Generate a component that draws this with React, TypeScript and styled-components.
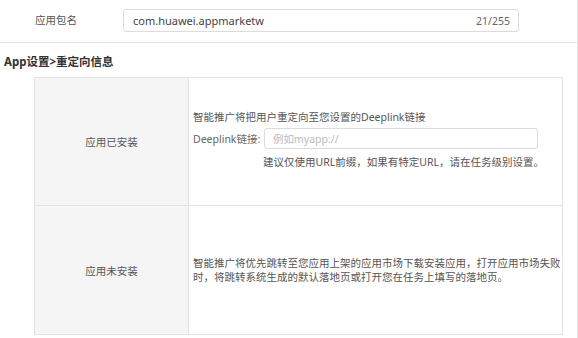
import styled, { createGlobalStyle } from 'styled-components';

const GlobalStyle = createGlobalStyle`
  html, body {
    margin: 0;
    padding: 0;
    background: #ffffff;
  }
  body {
    font-family: "Noto Sans", "Noto Sans CJK SC", sans-serif;
    color: #555;
  }
`;

const Page = styled.div`
  width: 578px;
  height: 338px;
  box-sizing: border-box;
  border-right: 1px solid #e2e2e2;
  overflow: hidden;
`;

const FieldRow = styled.div`
  height: 43px;
  box-sizing: border-box;
  border-bottom: 1px solid #e2e2e2;
  display: flex;
  align-items: flex-start;
  padding-top: 9px;
`;

const FieldLabel = styled.div`
  width: 123px;
  padding-left: 35px;
  box-sizing: border-box;
  font-size: 10.5px;
  line-height: 23px;
  color: #555;
`;

const TextBox = styled.div`
  width: 396px;
  height: 23px;
  box-sizing: border-box;
  border: 1px solid #dcdcdc;
  border-radius: 3px;
  display: flex;
  align-items: center;
  justify-content: space-between;
  padding: 0 8px 0 9px;
  font-size: 11px;
  color: #444;
`;

const Counter = styled.span`
  color: #666;
  font-size: 10.5px;
`;

const SectionTitle = styled.div`
  padding: 11px 0 0 4px;
  height: 34px;
  box-sizing: border-box;
  font-size: 11.5px;
  font-weight: bold;
  color: #333;
  line-height: 16px;
`;

const Table = styled.div`
  margin-left: 34px;
  width: 529px;
  box-sizing: border-box;
  border: 1px solid #e2e2e2;
`;

const TableRow = styled.div<{ $height: number; $last?: boolean }>`
  display: grid;
  grid-template-columns: 154px 1fr;
  height: ${({ $height }) => $height}px;
  border-bottom: ${({ $last }) => ($last ? 'none' : '1px solid #e2e2e2')};
`;

const KeyCell = styled.div`
  background: #f5f5f5;
  border-right: 1px solid #e2e2e2;
  display: flex;
  align-items: center;
  justify-content: center;
  font-size: 10.5px;
  color: #555;
`;

const ValueCell = styled.div<{ $offset?: number }>`
  display: flex;
  flex-direction: column;
  justify-content: center;
  padding: 0 0 0 4px;
  padding-bottom: ${({ $offset }) => $offset ?? 0}px;
  font-size: 10.5px;
  line-height: 14px;
  color: #555;
`;

const Paragraph = styled.div`
  color: #555;
`;

const InlineField = styled.div`
  display: flex;
  align-items: center;
  margin-top: 4px;
`;

const InlineLabel = styled.span`
  width: 71px;
  color: #666;
`;

const SmallInput = styled.div`
  width: 274px;
  height: 21px;
  box-sizing: border-box;
  border: 1px solid #dcdcdc;
  border-radius: 3px;
  padding-left: 8px;
  display: flex;
  align-items: center;
  color: #bbb;
`;

const Hint = styled.div`
  margin: 6px 0 0 70px;
  color: #555;
`;

export default function App() {
  return (
    <>
      <GlobalStyle />
      <Page>
        <FieldRow>
          <FieldLabel>应用包名</FieldLabel>
          <TextBox>
            <span>com.huawei.appmarketw</span>
            <Counter>21/255</Counter>
          </TextBox>
        </FieldRow>
        <SectionTitle>App设置&gt;重定向信息</SectionTitle>
        <Table>
          <TableRow $height={127}>
            <KeyCell>应用已安装</KeyCell>
            <ValueCell $offset={4}>
              <Paragraph>智能推广将把用户重定向至您设置的Deeplink链接</Paragraph>
              <InlineField>
                <InlineLabel>Deeplink链接:</InlineLabel>
                <SmallInput>例如myapp://</SmallInput>
              </InlineField>
              <Hint>建议仅使用URL前缀，如果有特定URL，请在任务级别设置。</Hint>
            </ValueCell>
          </TableRow>
          <TableRow $height={128} $last>
            <KeyCell>应用未安装</KeyCell>
            <ValueCell>
              <Paragraph>
                智能推广将优先跳转至您应用上架的应用市场下载安装应用，打开应用市场失败时，将跳转系统生成的默认落地页或打开您在任务上填写的落地页。
              </Paragraph>
            </ValueCell>
          </TableRow>
        </Table>
      </Page>
    </>
  );
}
